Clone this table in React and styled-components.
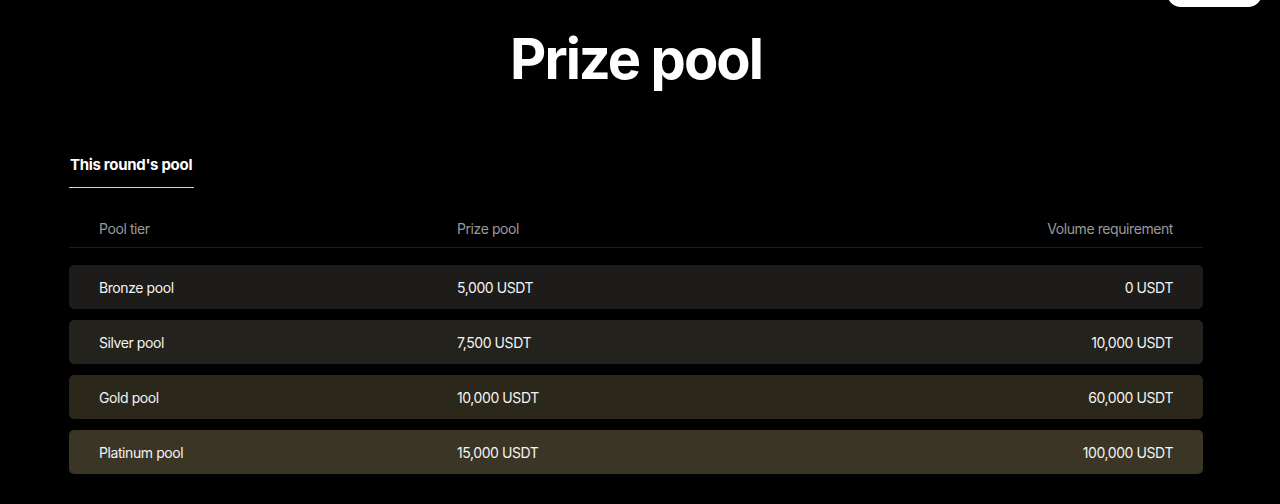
import React from 'react';
import styled, { createGlobalStyle } from 'styled-components';

const Global = createGlobalStyle`
  html, body {
    margin: 0;
    padding: 0;
    background: #000;
    color: #fff;
    font-family: Inter, 'Noto Sans', sans-serif;
  }
`;

const Page = styled.div`
  position: relative;
  width: 1280px;
  height: 504px;
  overflow: hidden;
  background: #000;
`;

const HeaderButton = styled.div`
  position: absolute;
  top: -30px;
  right: 18px;
  width: 95px;
  height: 37px;
  border-radius: 14px;
  background: #fff;
`;

const Section = styled.section`
  width: 1134px;
  margin-left: 69px;
  padding-top: 23px;
`;

const Title = styled.h1`
  margin: 0;
  text-align: center;
  font-size: 56px;
  line-height: 72px;
  font-weight: 700;
  letter-spacing: -0.035em;
`;

const Tabs = styled.div`
  display: flex;
  margin-top: 52px;
`;

const Tab = styled.div`
  width: 125px;
  height: 41px;
  box-sizing: border-box;
  padding: 7px 0 0 1px;
  font-size: 15px;
  line-height: 22px;
  font-weight: 700;
  letter-spacing: -0.02em;
  border-bottom: 1.5px solid ${(p) => (p.active ? '#d4d4d4' : 'transparent')};
`;

const Grid = styled.div`
  display: grid;
  grid-template-columns: repeat(3, 1fr);
  padding: 0 30px;
  align-items: center;
`;

const HeadRow = styled(Grid)`
  margin-top: 22px;
  height: 37px;
  border-bottom: 1px solid #1e1e1e;
  color: #9a9a9a;
  font-size: 14px;
  letter-spacing: -0.03em;
`;

const Rows = styled.div`
  display: flex;
  flex-direction: column;
  gap: 11px;
  margin-top: 17px;
`;

const Row = styled(Grid)`
  height: 44px;
  border-radius: 5px;
  background: ${(p) => p.bg};
  font-size: 14px;
  letter-spacing: -0.03em;
  color: #f4f4f4;
`;

const Cell = styled.div`
  text-align: ${(p) => (p.right ? 'right' : 'left')};
`;

const tiers = [
  { name: 'Bronze pool', prize: '5,000 USDT', volume: '0 USDT', bg: '#1d1c1a' },
  { name: 'Silver pool', prize: '7,500 USDT', volume: '10,000 USDT', bg: '#23221c' },
  { name: 'Gold pool', prize: '10,000 USDT', volume: '60,000 USDT', bg: '#2b281b' },
  { name: 'Platinum pool', prize: '15,000 USDT', volume: '100,000 USDT', bg: '#3a3524' },
];

export default function App() {
  return (
    <Page>
      <Global />
      <HeaderButton />
      <Section>
        <Title>Prize pool</Title>
        <Tabs>
          <Tab active>This round's pool</Tab>
        </Tabs>
        <HeadRow>
          <Cell>Pool tier</Cell>
          <Cell>Prize pool</Cell>
          <Cell right>Volume requirement</Cell>
        </HeadRow>
        <Rows>
          {tiers.map((t) => (
            <Row key={t.name} bg={t.bg}>
              <Cell>{t.name}</Cell>
              <Cell>{t.prize}</Cell>
              <Cell right>{t.volume}</Cell>
            </Row>
          ))}
        </Rows>
      </Section>
    </Page>
  );
}
